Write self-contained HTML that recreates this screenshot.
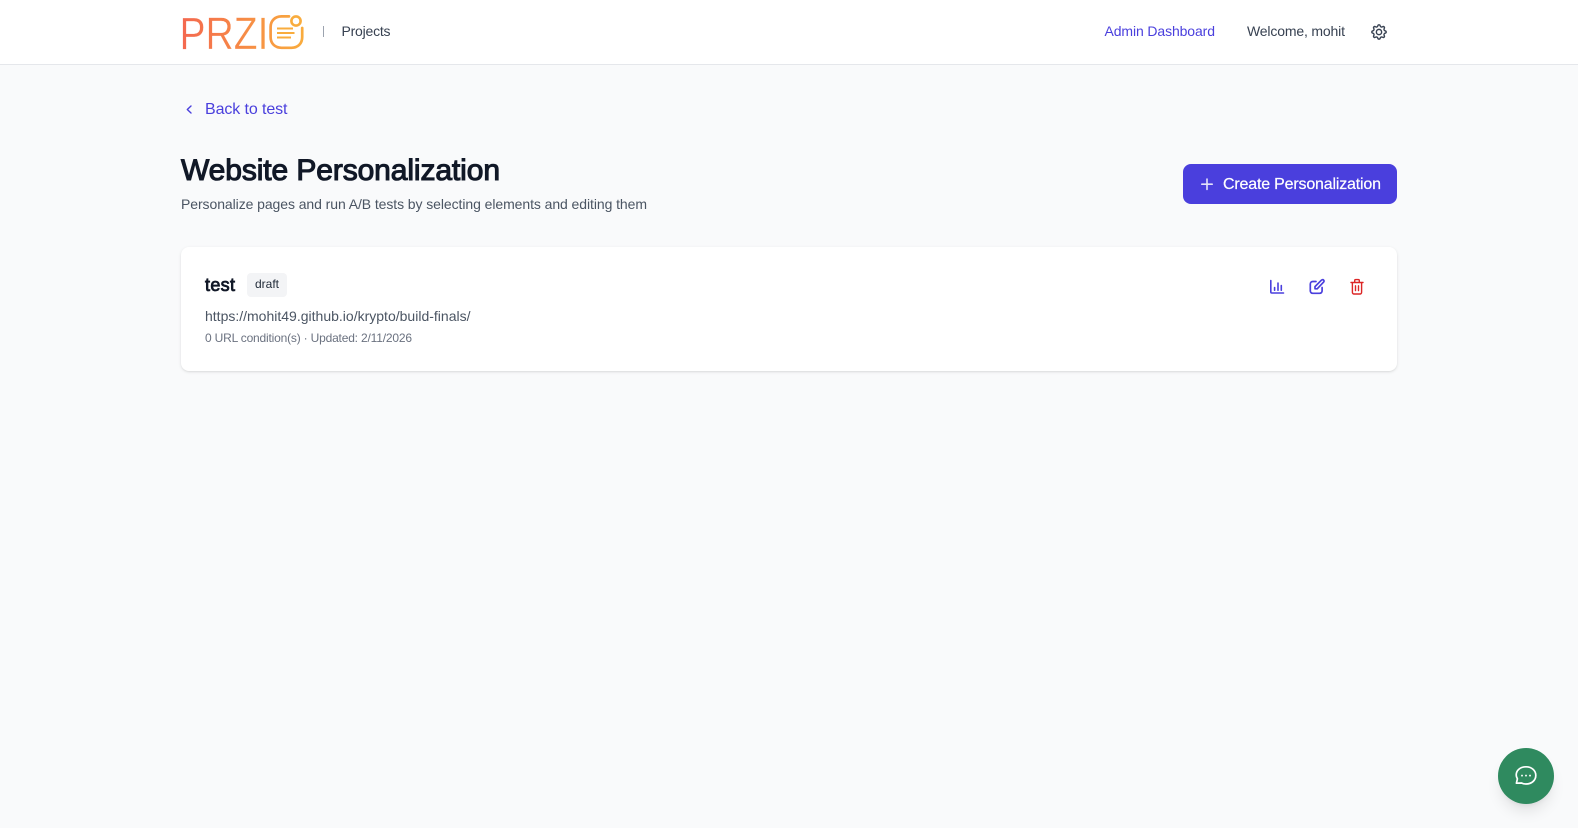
<!DOCTYPE html>
<html lang="en">
<head>
<meta charset="utf-8">
<title>Website Personalization</title>
<style>
html,body{margin:0;padding:0;width:1578px;height:828px;overflow:hidden;background:#f9fafb;font-family:"Liberation Sans",sans-serif}
header{position:absolute;left:0;top:0;width:1578px;height:64px;background:#fff;border-bottom:1px solid #e5e7eb}
.sep{position:absolute;left:323px;top:26px;width:1px;height:11px;background:#9ca3af}
.btn{position:absolute;left:1183px;top:164px;width:214px;height:40px;background:#4a3fdd;border-radius:8px}
.card{position:absolute;left:181px;top:247px;width:1216px;height:124px;background:#fff;border-radius:8px;box-shadow:0 1px 3px rgba(0,0,0,.1),0 1px 2px -1px rgba(0,0,0,.1)}
.badge{position:absolute;left:247px;top:273px;width:40px;height:24px;background:#f3f4f6;border-radius:4px}
.chat{position:absolute;left:1498px;top:748px;width:56px;height:56px;border-radius:50%;background:#2f8a5f;box-shadow:0 10px 15px -3px rgba(0,0,0,.1),0 4px 6px -4px rgba(0,0,0,.1)}
svg.layer{position:absolute;left:0;top:0}
text{font-family:"Liberation Sans",sans-serif}
</style>
</head>
<body>
<header></header>
<div class="sep"></div>
<div class="btn"></div>
<div class="card"></div>
<div class="badge"></div>
<div class="chat"></div>
<svg class="layer" width="1578" height="828" viewBox="0 0 1578 828" xmlns="http://www.w3.org/2000/svg">
  <defs>
    <linearGradient id="lg" gradientUnits="userSpaceOnUse" x1="183" y1="0" x2="304" y2="0">
      <stop offset="0" stop-color="#f4694f"/>
      <stop offset="1" stop-color="#f9ac3d"/>
    </linearGradient>
  </defs>

  <!-- logo -->
  <text x="179.5" y="49" font-size="45" textLength="89" lengthAdjust="spacingAndGlyphs" fill="url(#lg)" stroke="#fff" stroke-width=".35" paint-order="fill stroke">PRZI</text>
  <path d="M289 16.4H281.5C275 16.4 270.6 20.8 270.6 27V37C270.6 43.5 275 47.8 281.5 47.8H291.5C298 47.8 302.2 43.5 302.2 37V28" fill="none" stroke="url(#lg)" stroke-width="2.7" stroke-linecap="round"/>
  <circle cx="296" cy="21" r="4.6" fill="none" stroke="#f9ac3d" stroke-width="2.6"/>
  <path d="M277 28.5H293M277 33H294.5M277 37.5H291" fill="none" stroke="#f9ac3d" stroke-width="1.9"/>

  <!-- header text -->
  <text x="341.5" y="36" font-size="14" textLength="49" fill="#374151">Projects</text>
  <text x="1104.5" y="36" font-size="14" textLength="110.5" fill="#4a3fdd">Admin Dashboard</text>
  <text x="1247" y="36" font-size="14" textLength="98" fill="#374151">Welcome, mohit</text>

  <!-- gear -->
  <g transform="translate(1370.2,23.2) scale(.88)" fill="none" stroke="#374151" stroke-width="1.6" stroke-linecap="round" stroke-linejoin="round">
    <path d="M8.6 3.1C9 1.4 11 1.4 11.4 3.1C11.7 4.2 12.9 4.7 13.9 4.1C15.4 3.2 16.8 4.6 15.9 6.1C15.3 7.1 15.8 8.3 16.9 8.6C18.6 9 18.6 11 16.9 11.4C15.8 11.7 15.3 12.9 15.9 13.9C16.8 15.4 15.4 16.8 13.9 15.9C12.9 15.3 11.7 15.8 11.4 16.9C11 18.6 9 18.6 8.6 16.9C8.3 15.8 7.1 15.3 6.1 15.9C4.6 16.8 3.2 15.4 4.1 13.9C4.7 12.9 4.2 11.7 3.1 11.4C1.4 11 1.4 9 3.1 8.6C4.2 8.3 4.7 7.1 4.1 6.1C3.2 4.6 4.6 3.2 6.1 4.1C7.1 4.7 8.3 4.2 8.6 3.1Z"/>
    <circle cx="10" cy="10" r="3"/>
  </g>

  <!-- back link -->
  <path d="M191 106L187.3 109.5L191 113" fill="none" stroke="#4a3fdd" stroke-width="1.4" stroke-linecap="round" stroke-linejoin="round"/>
  <text x="205" y="114" font-size="16" textLength="82.5" fill="#4a3fdd">Back to test</text>

  <!-- heading -->
  <text x="181" y="180" font-size="30" textLength="319" fill="#111827" stroke="#111827" stroke-width="1.1">Website Personalization</text>
  <text x="181" y="209" font-size="14" textLength="466" fill="#4b5563">Personalize pages and run A/B tests by selecting elements and editing them</text>

  <!-- button -->
  <path d="M1207 179V189.4M1201.8 184.2H1212.2" fill="none" stroke="#fff" stroke-opacity=".85" stroke-width="1.6" stroke-linecap="round"/>
  <text x="1223" y="189" font-size="16" textLength="158" fill="#fff" stroke="#fff" stroke-width=".2">Create Personalization</text>

  <!-- card -->
  <text x="205" y="291" font-size="18" textLength="30" fill="#111827" stroke="#111827" stroke-width=".8">test</text>
  <text x="255" y="288" font-size="12" textLength="24" fill="#1f2937">draft</text>
  <text x="205" y="321" font-size="14" textLength="265.5" fill="#4b5563">https://mohit49.github.io/krypto/build-finals/</text>
  <text x="205" y="342" font-size="12" textLength="207" fill="#6b7280">0 URL condition(s) · Updated: 2/11/2026</text>

  <!-- chart icon -->
  <path d="M1270.8 280.5V292C1270.8 292.6 1271.2 293 1271.8 293H1283.5M1274.6 290.2V287.5M1278 290.2V283M1281.3 290.2V285.5" fill="none" stroke="#4a3fdd" stroke-width="1.6" stroke-linecap="round" stroke-linejoin="round"/>
  <!-- edit icon -->
  <path d="M1316 281.5H1312.8C1311.3 281.5 1310.3 282.5 1310.3 284V290.8C1310.3 292.3 1311.3 293.3 1312.8 293.3H1319.6C1321.1 293.3 1322.1 292.3 1322.1 290.8V287.5M1315 288.8V286.6L1321.4 280.2C1322.1 279.5 1323 279.5 1323.6 280.1C1324.2 280.7 1324.2 281.6 1323.5 282.2L1317.2 288.8Z" fill="none" stroke="#4a3fdd" stroke-width="1.7" stroke-linecap="round" stroke-linejoin="round"/>
  <!-- trash icon -->
  <path d="M1351 282.5H1363M1352.4 282.5V292.2C1352.4 293.2 1353.1 294 1354 294H1360C1360.9 294 1361.6 293.2 1361.6 292.2V282.5M1354.7 282.5V280.6C1354.7 280 1355.1 279.6 1355.7 279.6H1358.3C1358.9 279.6 1359.3 280 1359.3 280.6V282.5M1355.5 285.8V290.6M1358.5 285.8V290.6" fill="none" stroke="#dc2626" stroke-width="1.4" stroke-linecap="round" stroke-linejoin="round"/>

  <!-- chat icon -->
  <path d="M1516.4 783.2L1517.4 778.8C1516.6 777.4 1516.2 776.2 1516.2 775C1516.2 770.2 1520.4 766.8 1526 766.8C1531.6 766.8 1535.8 770.4 1535.8 775.4C1535.8 780.4 1531.6 784 1526 784C1524.4 784 1523 783.7 1521.6 783Z" fill="none" stroke="#fff" stroke-width="1.7" stroke-linejoin="round"/>
  <path d="M1522 775.6H1522.01M1526 775.6H1526.01M1530 775.6H1530.01" fill="none" stroke="#fff" stroke-width="1.9" stroke-linecap="round"/>
</svg>
</body>
</html>
